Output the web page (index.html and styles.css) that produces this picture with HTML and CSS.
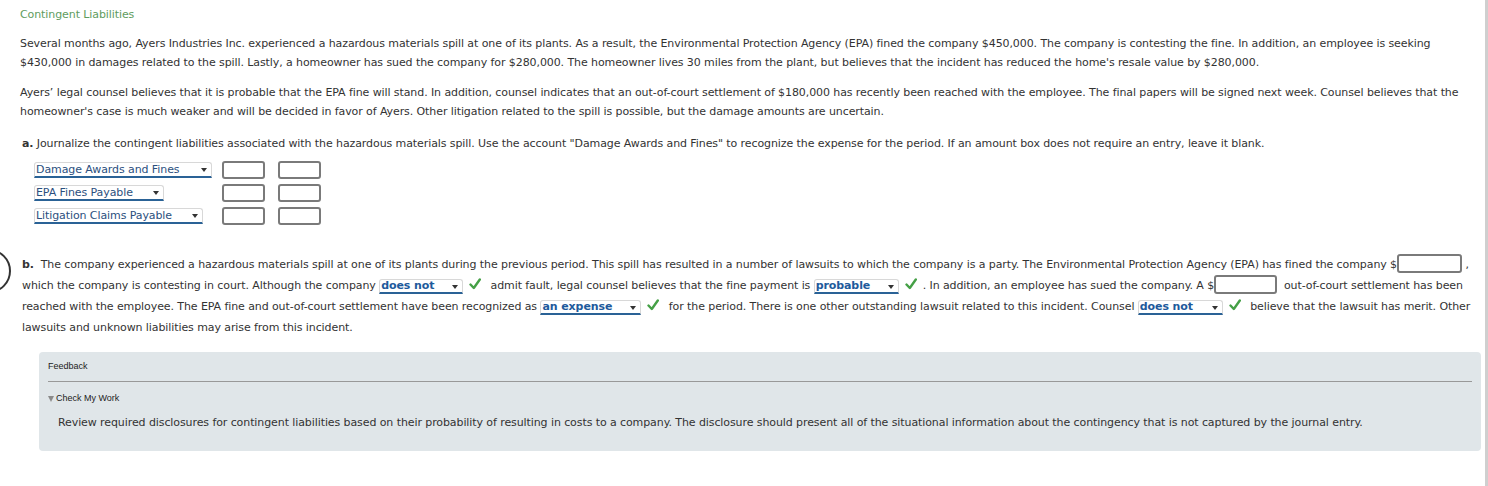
FILE: index.html
```html
<!DOCTYPE html>
<html lang="en">
<head>
<meta charset="utf-8">
<title>Contingent Liabilities</title>
<link rel="stylesheet" href="styles.css">
</head>
<body>
<div class="frame">
  <div class="ring"></div>
  <main class="page">
    <div class="title">Contingent Liabilities</div>
    <p class="para">Several months ago, Ayers Industries Inc. experienced a hazardous materials spill at one of its plants. As a result, the Environmental Protection Agency (EPA) fined the company $450,000. The company is contesting the fine. In addition, an employee is seeking<br>$430,000 in damages related to the spill. Lastly, a homeowner has sued the company for $280,000. The homeowner lives 30 miles from the plant, but believes that the incident has reduced the home's resale value by $280,000.</p>
    <p class="para">Ayers’ legal counsel believes that it is probable that the EPA fine will stand. In addition, counsel indicates that an out-of-court settlement of $180,000 has recently been reached with the employee. The final papers will be signed next week. Counsel believes that the<br>homeowner's case is much weaker and will be decided in favor of Ayers. Other litigation related to the spill is possible, but the damage amounts are uncertain.</p>

    <section class="part-a">
      <p class="question"><b>a.</b> Journalize the contingent liabilities associated with the hazardous materials spill. Use the account "Damage Awards and Fines" to recognize the expense for the period. If an amount box does not require an entry, leave it blank.</p>
      <div class="journal">
        <div class="jrow">
          <div class="jacct"><span class="sel sel-damage">Damage Awards and Fines<i class="arrow"></i></span></div>
          <span class="box"></span><span class="box"></span>
        </div>
        <div class="jrow">
          <div class="jacct"><span class="sel sel-epa">EPA Fines Payable<i class="arrow"></i></span></div>
          <span class="box"></span><span class="box"></span>
        </div>
        <div class="jrow">
          <div class="jacct"><span class="sel sel-lit">Litigation Claims Payable<i class="arrow"></i></span></div>
          <span class="box"></span><span class="box"></span>
        </div>
      </div>
    </section>

    <section class="part-b">
      <p class="bpara"><b>b.</b>&nbsp; The company experienced a hazardous materials spill at one of its plants during the previous period. This spill has resulted in a number of lawsuits to which the company is a party. The Environmental Protection Agency (EPA) has fined the company $<span class="inbox inbox-1"></span> ,<br>which the company is contesting in court. Although the company <span class="pick pick-84">does not<i class="arrow"></i></span><svg class="check" viewBox="0 0 12 12" aria-hidden="true"><polyline points="1.5,6.5 4.8,10 10.8,1.5"/></svg> admit fault, legal counsel believes that the fine payment is <span class="pick pick-85">probable<i class="arrow"></i></span><svg class="check" viewBox="0 0 12 12" aria-hidden="true"><polyline points="1.5,6.5 4.8,10 10.8,1.5"/></svg>. In addition, an employee has sued the company. A $<span class="inbox inbox-2"></span> &nbsp;out-of-court settlement has been<br>reached with the employee. The EPA fine and out-of-court settlement have been recognized as <span class="pick pick-101">an expense<i class="arrow"></i></span><svg class="check" viewBox="0 0 12 12" aria-hidden="true"><polyline points="1.5,6.5 4.8,10 10.8,1.5"/></svg> for the period. There is one other outstanding lawsuit related to this incident. Counsel <span class="pick pick-85">does not<i class="arrow"></i></span><svg class="check" viewBox="0 0 12 12" aria-hidden="true"><polyline points="1.5,6.5 4.8,10 10.8,1.5"/></svg> believe that the lawsuit has merit. Other<br>lawsuits and unknown liabilities may arise from this incident.</p>
    </section>

    <section class="feedback">
      <div class="fb-head">Feedback</div>
      <div class="fb-toggle"><span class="tri"></span>Check My Work</div>
      <p class="fb-text">Review required disclosures for contingent liabilities based on their probability of resulting in costs to a company. The disclosure should present all of the situational information about the contingency that is not captured by the journal entry.</p>
    </section>
  </main>
</div>
</body>
</html>
```

FILE: styles.css
```css
* { box-sizing: border-box; }

html, body {
  margin: 0;
  padding: 0;
  background: #ffffff;
}

body {
  font-family: "DejaVu Sans", Verdana, sans-serif;
  font-size: 11px;
  letter-spacing: -0.09px;
  color: #333333;
}

.frame {
  position: relative;
  width: 1488px;
  min-height: 486px;
  border-right: 3px solid #cfcfcf;
  overflow: hidden;
}

.ring {
  position: absolute;
  left: -33px;
  top: 249px;
  width: 44px;
  height: 44px;
  border: 2.5px solid #333333;
  border-radius: 50%;
}

.page {
  padding: 7px 0 0 20px;
}

.title {
  color: #5e9c5e;
  line-height: 16px;
}

.para {
  margin: 11px 0 0;
  line-height: 19px;
  white-space: nowrap;
}

.part-a {
  margin-top: 15px;
  padding-left: 2px;
}

.question {
  margin: 0;
  line-height: 16px;
  white-space: nowrap;
}

.journal {
  display: flex;
  flex-direction: column;
  gap: 5px;
  margin-top: 9px;
  padding-left: 12px;
}

.jrow {
  display: flex;
  align-items: center;
  height: 18px;
}

.jacct {
  width: 188px;
}

.sel {
  position: relative;
  display: inline-block;
  height: 16px;
  line-height: 13px;
  padding: 0 12px 0 1px;
  border: 1px solid #d8d8d8;
  border-bottom: 2px solid #2a6296;
  border-radius: 3px 3px 0 0;
  color: #2b4f7e;
  white-space: nowrap;
}

.sel-damage { width: 178px; }
.sel-epa { width: 130px; }
.sel-lit { width: 169px; }

.arrow {
  position: absolute;
  right: 4px;
  top: 5px;
  width: 0;
  height: 0;
  border-left: 3px solid transparent;
  border-right: 3px solid transparent;
  border-top: 4px solid #333333;
}

.box {
  display: inline-block;
  width: 43px;
  height: 18px;
  border: 2px solid #7a7a7a;
  border-radius: 3px;
  background: #ffffff;
}

.box + .box {
  margin-left: 13px;
}

.part-b {
  margin-top: 29px;
  padding-left: 2px;
}

.bpara {
  margin: 0;
  line-height: 21px;
  white-space: nowrap;
}

.bpara b {
  font-weight: bold;
}

.inbox {
  display: inline-block;
  vertical-align: middle;
  height: 19px;
  border: 2px solid #7a7a7a;
  border-radius: 3px;
  margin-top: -3px;
}

.inbox-1 { width: 65px; }
.inbox-2 { width: 63px; }

.pick {
  position: relative;
  display: inline-block;
  height: 15px;
  line-height: 12px;
  padding: 0 12px 0 1px;
  border: 1px solid #d8d8d8;
  border-bottom: 2px solid #2a6296;
  border-radius: 3px 3px 0 0;
  color: #1e5a9c;
  font-weight: bold;
}

.pick-84 { width: 84px; }
.pick-85 { width: 85px; }
.pick-101 { width: 101px; }

.check {
  display: inline-block;
  width: 12px;
  height: 12px;
  margin: 0 6px 0 6px;
  vertical-align: -1px;
  fill: none;
  stroke: #45a046;
  stroke-width: 2.4;
  stroke-linecap: round;
  stroke-linejoin: round;
}

.feedback {
  margin: 14px 4px 0 19px;
  padding: 9px 9px 12px;
  background: #e0e6e9;
  border-radius: 4px;
  height: 99px;
}

.fb-head {
  font-family: "Liberation Sans", Arial, sans-serif;
  font-size: 9px;
  letter-spacing: 0;
  color: #222222;
  line-height: 11px;
  padding-bottom: 9px;
  border-bottom: 1px solid #999999;
}

.fb-toggle {
  display: flex;
  align-items: center;
  font-family: "Liberation Sans", Arial, sans-serif;
  font-size: 9px;
  letter-spacing: 0;
  color: #222222;
  line-height: 11px;
  margin-top: 11px;
}

.tri {
  display: inline-block;
  width: 0;
  height: 0;
  border-left: 3.5px solid transparent;
  border-right: 3.5px solid transparent;
  border-top: 6px solid #8a8a8a;
  margin-right: 2px;
}

.fb-text {
  margin: 11px 0 0 10px;
  line-height: 16px;
  white-space: nowrap;
}
```
